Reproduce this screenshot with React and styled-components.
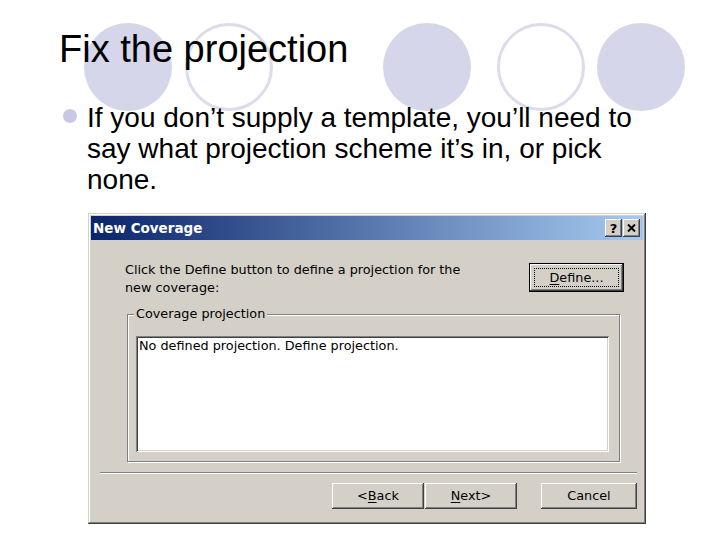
import React from 'react';
import styled, { createGlobalStyle } from 'styled-components';

const GlobalStyle = createGlobalStyle`
  html, body {
    margin: 0;
    padding: 0;
    background: #fff;
  }
`;

const decorCircles = [
  { x: 84, hollow: false },
  { x: 185, hollow: true },
  { x: 383, hollow: false },
  { x: 497, hollow: true },
  { x: 597, hollow: false },
];

const CloseGlyph = () => (
  <svg width="9" height="8" viewBox="0 0 9 8">
    <path d="M1 0.5 L8 7.5 M8 0.5 L1 7.5" stroke="#000" strokeWidth="2" />
  </svg>
);

const App = () => {
  return (
    <>
      <GlobalStyle />
      <Slide>
        {decorCircles.map((c) => (
          <Circle key={c.x} $x={c.x} $hollow={c.hollow} />
        ))}

        <Content>
          <Title>Fix the projection</Title>

          <BulletItem>
            <BulletDot />
            <BulletText>
              If you don’t supply a template, you’ll need to say what projection scheme it’s in, or pick none.
            </BulletText>
          </BulletItem>

          <Dialog>
            <TitleBar>
              <TitleText>New Coverage</TitleText>
              <TitleButtons>
                <TitleButton>?</TitleButton>
                <TitleButton><CloseGlyph /></TitleButton>
              </TitleButtons>
            </TitleBar>

            <DialogBody>
              <TopRow>
                <Prompt>Click the Define button to define a projection for the new coverage:</Prompt>
                <WinButton $default $w={95} $h={29}>
                  <FocusRing>
                    <u>D</u>efine...
                  </FocusRing>
                </WinButton>
              </TopRow>

              <GroupBox>
                <GroupLabel>Coverage projection</GroupLabel>
                <ProjectionBox>No defined projection. Define projection.</ProjectionBox>
              </GroupBox>

              <Separator />

              <ButtonRow>
                <WinButton $w={92} $h={26}>&lt;<u>B</u>ack</WinButton>
                <WinButton $w={92} $h={26}><u>N</u>ext&gt;</WinButton>
                <WinButton $w={96} $h={26} $gap={23}>Cancel</WinButton>
              </ButtonRow>
            </DialogBody>
          </Dialog>
        </Content>
      </Slide>
    </>
  );
};

export default App;

const Slide = styled.div`
  position: relative;
  width: 720px;
  height: 540px;
  overflow: hidden;
  background: #fff;
`;

// decorative template circles sitting behind the slide text
const Circle = styled.div`
  position: absolute;
  top: 23px;
  left: ${(p) => p.$x}px;
  width: 88px;
  height: 88px;
  border-radius: 50%;
  box-sizing: border-box;
  background: ${(p) => (p.$hollow ? 'transparent' : '#d6d6ea')};
  border: ${(p) => (p.$hollow ? '3px solid #dcdcec' : 'none')};
`;

const Content = styled.div`
  position: relative;
  padding: 30px 0 0 59px;
`;

const Title = styled.h1`
  margin: 0;
  font-family: "Liberation Sans", Arial, sans-serif;
  font-weight: 400;
  font-size: 38px;
  line-height: 38px;
  color: #000;
`;

const BulletItem = styled.div`
  display: flex;
  align-items: flex-start;
  margin-top: 34px;
`;

const BulletDot = styled.span`
  flex: none;
  width: 14px;
  height: 14px;
  margin: 7px 10px 0 4px;
  border-radius: 50%;
  background: #c8c8e6;
`;

const BulletText = styled.p`
  margin: 0;
  width: 565px;
  font-family: "Liberation Sans", Arial, sans-serif;
  font-size: 28px;
  line-height: 31px;
  color: #000;
`;

const Dialog = styled.div`
  box-sizing: border-box;
  width: 558px;
  height: 311px;
  margin: 18px 0 0 29px;
  padding: 3px;
  background: #d4d0c8;
  box-shadow: inset -1px -1px #404040, inset 1px 1px #d4d0c8,
    inset -2px -2px #808080, inset 2px 2px #fff;
  font-family: "DejaVu Sans", Tahoma, sans-serif;
  font-size: 12.8px;
  color: #000;
`;

const TitleBar = styled.div`
  display: flex;
  align-items: center;
  justify-content: space-between;
  height: 24px;
  padding: 0 3px 0 2px;
  background: linear-gradient(to right, #0a246a, #a6caf0);
`;

const TitleText = styled.span`
  font-weight: 700;
  font-size: 13.5px;
  color: #fff;
`;

const TitleButtons = styled.div`
  display: flex;
  gap: 1px;
`;

const TitleButton = styled.span`
  display: flex;
  align-items: center;
  justify-content: center;
  width: 17px;
  height: 18px;
  box-sizing: border-box;
  background: #d4d0c8;
  box-shadow: inset -1px -1px #404040, inset 1px 1px #fff,
    inset -2px -2px #808080;
  font-family: "DejaVu Sans", sans-serif;
  font-weight: 700;
  font-size: 13px;
  line-height: 1;
`;

const DialogBody = styled.div`
  padding: 21px 6px 0 9px;
`;

const TopRow = styled.div`
  display: flex;
  justify-content: space-between;
  align-items: flex-start;
  padding: 0 13px 0 25px;
`;

const Prompt = styled.p`
  margin: 0;
  width: 345px;
  line-height: 18px;
`;

const WinButton = styled.div`
  display: flex;
  align-items: center;
  justify-content: center;
  box-sizing: border-box;
  width: ${(p) => p.$w}px;
  height: ${(p) => p.$h}px;
  margin-left: ${(p) => p.$gap || 0}px;
  margin-top: ${(p) => (p.$default ? 2 : 0)}px;
  background: #d4d0c8;
  border: ${(p) => (p.$default ? '1px solid #000' : 'none')};
  box-shadow: inset -1px -1px #404040, inset 1px 1px #fff,
    inset -2px -2px #808080;
  line-height: 16px;
  u {
    text-underline-offset: 2px;
  }
`;

const FocusRing = styled.span`
  display: flex;
  align-items: center;
  justify-content: center;
  width: calc(100% - 8px);
  height: calc(100% - 8px);
  border: 1px dotted #000;
  box-sizing: border-box;
`;

const GroupBox = styled.fieldset`
  margin: 9px 17px 0 27px;
  padding: 14px 10px 9px 8px;
  border: 1px solid #808080;
  box-shadow: inset 1px 1px #fff, 1px 1px #fff;
`;

const GroupLabel = styled.legend`
  margin-left: -2px;
  padding: 0 2px;
  line-height: 16px;
  background: #d4d0c8;
`;

const ProjectionBox = styled.div`
  height: 116px;
  box-sizing: border-box;
  padding: 1px 2px 0 3px;
  background: #fff;
  line-height: 18px;
  box-shadow: inset 1px 1px #808080, inset -1px -1px #fff,
    inset 2px 2px #404040, inset -2px -2px #d4d0c8;
`;

const Separator = styled.div`
  height: 1px;
  margin-top: 10px;
  background: #808080;
  border-bottom: 1px solid #fff;
`;

const ButtonRow = styled.div`
  display: flex;
  justify-content: flex-end;
  gap: 1px;
  margin-top: 9px;
`;
